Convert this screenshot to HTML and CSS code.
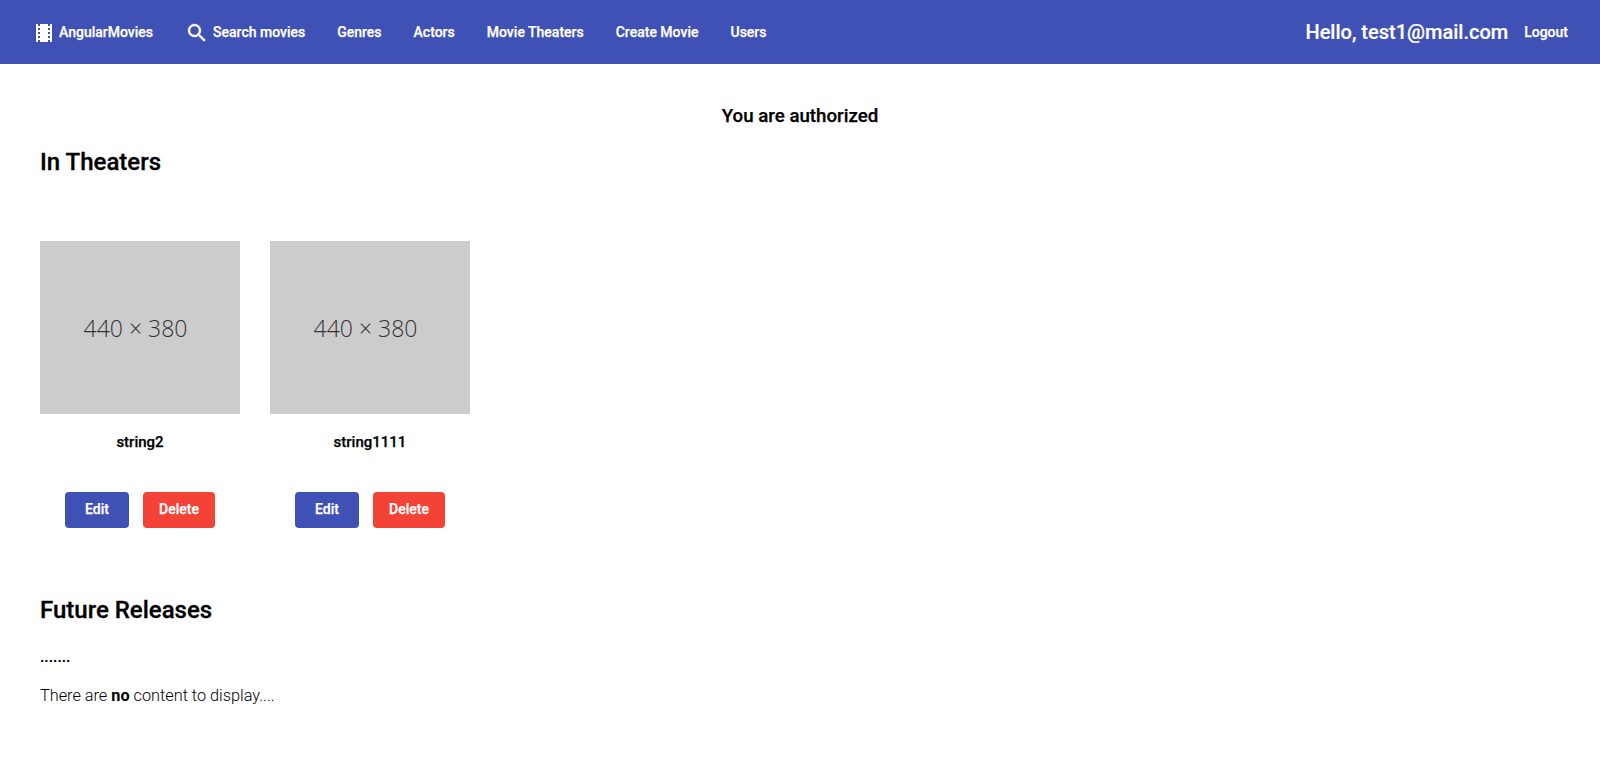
FILE: index.html
```html
<!DOCTYPE html>
<html lang="en">
<head>
<meta charset="utf-8">
<title>AngularMovies</title>
<link rel="stylesheet" href="styles.css">
</head>
<body>
<header class="toolbar">
  <nav class="nav">
    <a class="nav-btn"><svg class="icon icon-film" viewBox="0 0 24 24" width="24" height="24"><path fill="#fff" d="M18 3v2h-2V3H8v2H6V3H4v18h2v-2h2v2h8v-2h2v2h2V3h-2zM8 17H6v-2h2v2zm0-4H6v-2h2v2zm0-4H6V7h2v2zm10 8h-2v-2h2v2zm0-4h-2v-2h2v2zm0-4h-2V7h2v2z"/></svg>AngularMovies</a>
    <a class="nav-btn"><svg class="icon icon-search" viewBox="0 0 24 24" width="24" height="24"><path fill="#fff" d="M15.5 14h-.79l-.28-.27A6.47 6.47 0 0 0 16 9.5 6.5 6.5 0 1 0 9.5 16c1.61 0 3.09-.59 4.23-1.57l.27.28v.79l5 4.99L20.49 19l-4.99-5zm-6 0C7.01 14 5 11.99 5 9.5S7.01 5 9.5 5 14 7.01 14 9.5 11.99 14 9.5 14z"/></svg>Search movies</a>
    <a class="nav-btn">Genres</a>
    <a class="nav-btn">Actors</a>
    <a class="nav-btn">Movie Theaters</a>
    <a class="nav-btn">Create Movie</a>
    <a class="nav-btn">Users</a>
  </nav>
  <div class="user">
    <span class="hello">Hello, test1@mail.com</span>
    <a class="nav-btn">Logout</a>
  </div>
</header>
<main class="content">
  <h3 class="auth">You are authorized</h3>
  <h2 class="section-title">In Theaters</h2>
  <div class="movies">
    <article class="movie">
      <div class="poster">440 × 380</div>
      <p class="movie-name">string2</p>
      <div class="actions"><button class="btn btn-edit">Edit</button><button class="btn btn-delete">Delete</button></div>
    </article>
    <article class="movie">
      <div class="poster">440 × 380</div>
      <p class="movie-name">string1111</p>
      <div class="actions"><button class="btn btn-edit">Edit</button><button class="btn btn-delete">Delete</button></div>
    </article>
  </div>
  <h2 class="section-title future">Future Releases</h2>
  <p class="dots">.......</p>
  <p class="empty">There are <b class="strong">no</b> content to display....</p>
</main>
</body>
</html>
```
FILE: styles.css
```css
* { box-sizing: border-box; }
html, body { margin: 0; padding: 0; }
body { font-family: Roboto, "Liberation Sans", sans-serif; color: #000; background: #fff; height: 759px; overflow: hidden; }
.toolbar { height: 64px; background: #3f51b5; color: #fff; display: flex; align-items: center; justify-content: space-between; padding: 0 16px; }
.nav, .user { display: flex; align-items: center; }
.nav-btn { display: flex; align-items: center; height: 36px; padding: 0 16px; font-size: 14px; font-weight: 500; color: #fff; white-space: nowrap; -webkit-text-stroke: 0.25px currentColor; }
.icon { margin-right: 4px; margin-top: 2px; flex: none; }
.icon-film { margin-right: 3px; }
.icon-search path { stroke: #fff; stroke-width: 0.4px; }
.hello { font-size: 20px; font-weight: 500; -webkit-text-stroke: 0.2px currentColor; }
.content { padding: 0 40px; }
.auth { margin: 0; padding-top: 42px; text-align: center; font-size: 18.72px; font-weight: 500; line-height: 21px; -webkit-text-stroke: 0.25px currentColor; }
.section-title { margin: 0; font-size: 24px; font-weight: 500; line-height: 32px; -webkit-text-stroke: 0.3px currentColor; }
.auth + .section-title { margin-top: 19px; }
.movies { display: flex; gap: 30px; margin-top: 63px; }
.movie { width: 200px; display: flex; flex-direction: column; align-items: center; }
.poster { width: 200px; height: 173px; background: #ccc; color: #333; font-family: "Open Sans", sans-serif; font-weight: 300; font-size: 23px; display: flex; align-items: center; justify-content: center; padding-right: 9px; }
.movie-name { margin: 18px 0 0; font-size: 15px; font-weight: 500; line-height: 20px; -webkit-text-stroke: 0.25px currentColor; }
.actions { display: flex; gap: 14px; margin-top: 40px; }
.btn { height: 36px; padding: 0 16px 2px; border: 0; border-radius: 4px; color: #fff; font-family: inherit; font-size: 14px; font-weight: 500; -webkit-text-stroke: 0.25px currentColor; }
.btn-edit { width: 64px; background: #3f51b5; }
.btn-delete { width: 72px; background: #f44336; }
.future { margin-top: 66px; }
.dots { margin: 21px 0 0; font-size: 15px; font-weight: 700; line-height: 20px; }
.empty { margin: 19px 0 0; font-size: 16.3px; font-weight: 300; line-height: 20px; }
.strong { font-weight: 700; }
```
